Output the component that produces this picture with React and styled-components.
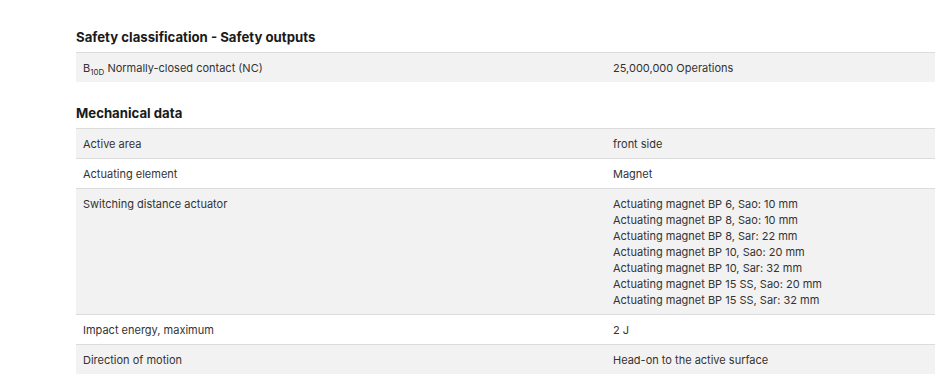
import React from "react";
import styled, { createGlobalStyle } from "styled-components";

const GlobalStyle = createGlobalStyle`
  html, body {
    margin: 0;
    padding: 0;
    background: #fff;
  }
  body {
    font-family: Inter, "Noto Sans", "Liberation Sans", sans-serif;
    color: #333;
  }
`;

const Page = styled.div`
  padding: 27px 0 0 76px;
  display: flex;
  flex-direction: column;
  gap: 21px;
`;

const Section = styled.section`
  display: flex;
  flex-direction: column;
`;

const Heading = styled.h3`
  margin: 0 0 5px;
  font-size: 13.2px;
  line-height: 20px;
  font-weight: 700;
  color: #1a1a1a;
`;

const Table = styled.div`
  display: flex;
  flex-direction: column;
`;

const Row = styled.div`
  display: grid;
  grid-template-columns: 530px 1fr;
  border-top: 1px solid #dcdcdc;
  background: ${(p) => (p.$striped ? "#f2f2f2" : "#fff")};
  font-size: 11px;
  line-height: 16px;
`;

const Label = styled.div`
  padding: 7px 7px 6px;
`;

const Value = styled.div`
  padding: 7px 7px 6px;
  display: flex;
  flex-direction: column;
`;

const Line = styled.span``;

const Sub = styled.sub`
  font-size: 8px;
  line-height: 0;
  vertical-align: -3px;
`;

const sections = [
  {
    title: "Safety classification - Safety outputs",
    rows: [
      {
        label: (
          <>
            B<Sub>10D</Sub> Normally-closed contact (NC)
          </>
        ),
        values: ["25,000,000 Operations"],
      },
    ],
  },
  {
    title: "Mechanical data",
    rows: [
      { label: "Active area", values: ["front side"] },
      { label: "Actuating element", values: ["Magnet"] },
      {
        label: "Switching distance actuator",
        values: [
          "Actuating magnet BP 6, Sao: 10 mm",
          "Actuating magnet BP 8, Sao: 10 mm",
          "Actuating magnet BP 8, Sar: 22 mm",
          "Actuating magnet BP 10, Sao: 20 mm",
          "Actuating magnet BP 10, Sar: 32 mm",
          "Actuating magnet BP 15 SS, Sao: 20 mm",
          "Actuating magnet BP 15 SS, Sar: 32 mm",
        ],
      },
      { label: "Impact energy, maximum", values: ["2 J"] },
      { label: "Direction of motion", values: ["Head-on to the active surface"] },
    ],
  },
];

const App = () => (
  <>
    <GlobalStyle />
    <Page>
      {sections.map((section) => (
        <Section key={section.title}>
          <Heading>{section.title}</Heading>
          <Table>
            {section.rows.map((row, i) => (
              <Row key={i} $striped={i % 2 === 0}>
                <Label>{row.label}</Label>
                <Value>
                  {row.values.map((v) => (
                    <Line key={v}>{v}</Line>
                  ))}
                </Value>
              </Row>
            ))}
          </Table>
        </Section>
      ))}
    </Page>
  </>
);

export default App;
